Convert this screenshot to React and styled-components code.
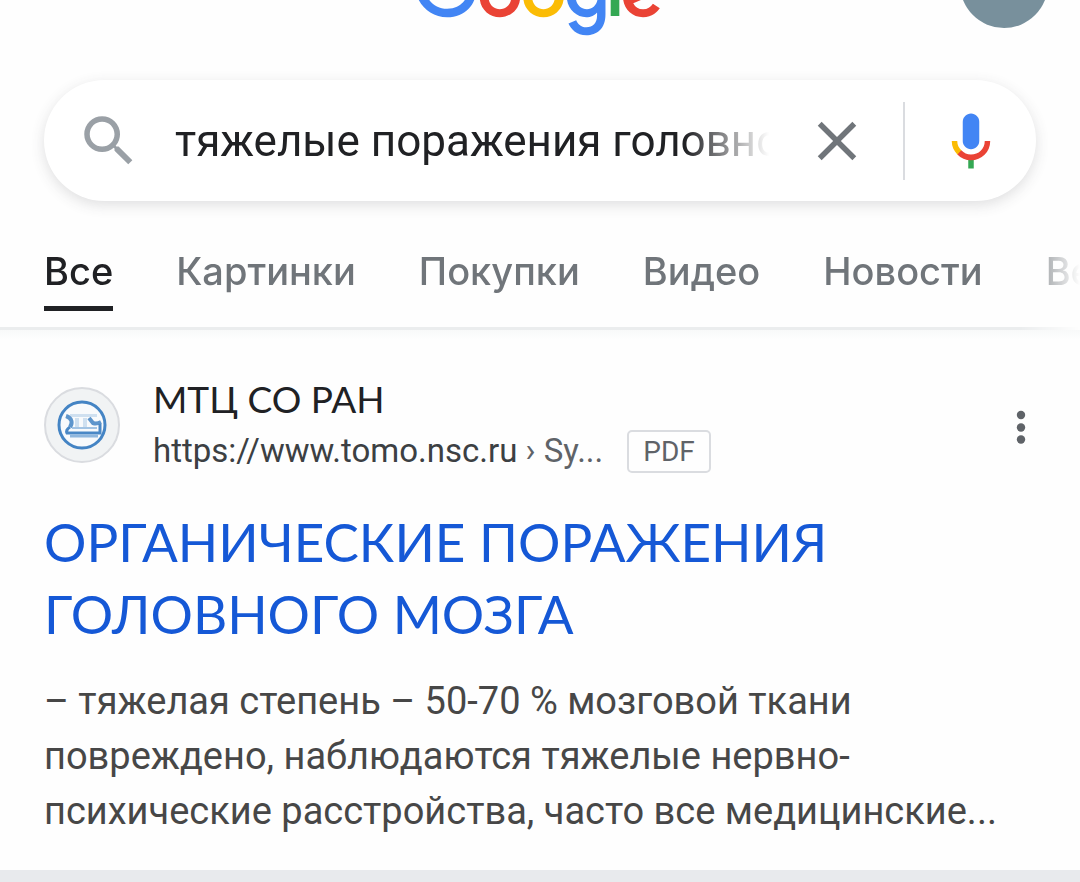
import React from "react";
import styled, { createGlobalStyle } from "styled-components";

const GlobalStyle = createGlobalStyle`
  * { box-sizing: border-box; }
  body { margin: 0; background: #fefefe; color: #202124; font-family: Roboto, "Liberation Sans", sans-serif; }
  button { border: 0; padding: 0; background: none; display: flex; cursor: pointer; }
`;

const Page = styled.div`
  overflow: hidden;
`;

const TopBar = styled.header`
  display: grid;
  grid-template-columns: 1fr auto 1fr;
  padding: 0 32px 0 28px;
  margin-top: -60px;
  height: 140px;
`;

const LogoLink = styled.a`
  grid-column: 2;
  align-self: start;
  display: flex;
  padding-top: 14px;
`;

const Avatar = styled.button`
  justify-self: end;
  align-self: start;
  width: 88px;
  height: 88px;
  border-radius: 50%;
  background: #78909c;
`;

const SearchBar = styled.form`
  display: flex;
  align-items: center;
  gap: 33px;
  height: 121px;
  margin: 0 44px;
  padding: 0 32px;
  border-radius: 61px;
  background: #fff;
  box-shadow: 0 4px 14px rgba(60, 64, 67, 0.16);
`;

const Icon = styled.svg`
  width: 66px;
  height: 66px;
  flex: none;
  display: block;
`;

const Query = styled.input`
  flex: 1;
  min-width: 0;
  border: 0;
  padding: 0;
  outline: 0;
  background: none;
  color: #202124;
  font: 400 44px/56px Roboto, "Liberation Sans", sans-serif;
  mask-image: linear-gradient(to left, transparent 2px, #000 86px);
`;

const Divider = styled.span`
  width: 2px;
  height: 78px;
  background: #dadce0;
`;

const Tabs = styled.nav`
  display: flex;
  gap: 63px;
  padding: 46px 44px 16px;
  overflow: hidden;
  border-bottom: 3px solid #ebedee;
  mask-image: linear-gradient(to left, transparent, #000 60px);
`;

const Tab = styled.a`
  flex: none;
  padding-bottom: 11px;
  border-bottom: 5px solid ${(p) => (p.$active ? "#202124" : "transparent")};
  color: ${(p) => (p.$active ? "#202124" : "#70757a")};
  font: 500 38px/48px Inter, "Liberation Sans", sans-serif;
  text-decoration: none;
`;

const Result = styled.article`
  padding: 43px 44px 31px;
  background: linear-gradient(#f8f9f9, #fefefe 10px);
`;

const Source = styled.div`
  display: flex;
  align-items: center;
  gap: 33px;
`;

const Favicon = styled.span`
  display: flex;
  align-items: center;
  justify-content: center;
  width: 76px;
  height: 76px;
  border: 2px solid #dadce0;
  border-radius: 50%;
  background: #f1f3f4;
`;

const SourceText = styled.div`
  flex: 1;
  min-width: 0;
`;

const SiteName = styled.div`
  font: 400 37px/52px Lato, "Liberation Sans", sans-serif;
`;

const UrlRow = styled.div`
  display: flex;
  align-items: center;
  gap: 24px;
  font-size: 33px;
  line-height: 52px;
  color: #3c4043;
`;

const Crumb = styled.span`
  color: #5f6368;
`;

const Badge = styled.span`
  padding: 0 14px;
  border: 2px solid #dadce0;
  border-radius: 5px;
  color: #5f6368;
  font-size: 28px;
  line-height: 39px;
`;

const Menu = styled.button`
  width: 30px;
  justify-content: center;
`;

const Title = styled.h3`
  margin: 29px 0 24px;
  font: 400 53px/72px Lato, "Liberation Sans", sans-serif;
`;

const TitleLink = styled.a`
  color: #1558d6;
  text-decoration: none;
`;

const Snippet = styled.p`
  margin: 0;
  font-size: 38px;
  line-height: 55px;
  color: #474747;
`;

const Band = styled.div`
  height: 12px;
  background: #e8eaed;
`;

const tabs = ["Все", "Картинки", "Покупки", "Видео", "Новости", "Ве"];

function GoogleLogo() {
  return (
    <svg width="247" height="84" viewBox="0 0 272 92" aria-hidden="true">
      <path fill="#EA4335" d="M115.75 47.18c0 12.77-9.99 22.18-22.25 22.18s-22.25-9.41-22.25-22.18C71.25 34.32 81.24 25 93.5 25s22.25 9.32 22.25 22.18zm-9.74 0c0-7.98-5.79-13.44-12.51-13.44S80.99 39.2 80.99 47.18c0 7.9 5.79 13.44 12.51 13.44s12.51-5.55 12.51-13.44z" />
      <path fill="#FBBC05" d="M163.75 47.18c0 12.77-9.99 22.18-22.25 22.18s-22.25-9.41-22.25-22.18c0-12.85 9.99-22.18 22.25-22.18s22.25 9.32 22.25 22.18zm-9.74 0c0-7.98-5.79-13.44-12.51-13.44s-12.51 5.46-12.51 13.44c0 7.9 5.79 13.44 12.51 13.44s12.51-5.55 12.51-13.44z" />
      <path fill="#4285F4" d="M209.75 26.34v39.82c0 16.38-9.66 23.07-21.08 23.07-10.75 0-17.22-7.19-19.66-13.07l8.48-3.53c1.51 3.61 5.21 7.87 11.17 7.87 7.31 0 11.84-4.51 11.84-13v-3.19h-.34c-2.18 2.69-6.38 5.04-11.68 5.04-11.09 0-21.25-9.66-21.25-22.09 0-12.52 10.16-22.26 21.25-22.26 5.29 0 9.49 2.35 11.68 4.96h.34v-3.61h9.25zm-8.56 20.92c0-7.81-5.21-13.52-11.84-13.52-6.72 0-12.35 5.71-12.35 13.52 0 7.73 5.63 13.36 12.35 13.36 6.63 0 11.84-5.63 11.84-13.36z" />
      <path fill="#34A853" d="M225 3v65h-9.5V3h9.5z" />
      <path fill="#EA4335" d="M262.02 54.48l7.56 5.04c-2.44 3.61-8.32 9.83-18.48 9.83-12.6 0-22.01-9.74-22.01-22.18 0-13.19 9.49-22.18 20.92-22.18 11.51 0 17.14 9.16 18.98 14.11l1.01 2.52-29.65 12.28c2.27 4.45 5.8 6.72 10.75 6.72 4.96 0 8.4-2.44 10.92-6.14zm-23.27-7.98l19.82-8.23c-1.09-2.77-4.37-4.7-8.23-4.7-4.95 0-11.84 4.37-11.59 12.93z" />
      <path fill="#4285F4" d="M35.29 41.41V32H67c.31 1.64.47 3.58.47 5.68 0 7.06-1.93 15.79-8.15 22.01-6.05 6.3-13.78 9.66-24.02 9.66C16.32 69.35.36 53.89.36 34.91.36 15.93 16.32.47 35.3.47c10.5 0 17.98 4.12 23.6 9.49l-6.64 6.64c-4.03-3.78-9.49-6.57-16.97-6.57-13.86 0-24.7 11.17-24.7 25.03 0 13.86 10.84 25.03 24.7 25.03 8.99 0 14.11-3.61 17.39-6.89 2.66-2.66 4.41-6.46 5.1-11.65l-22.49.01z" />
    </svg>
  );
}

export default function App() {
  return (
    <Page>
      <GlobalStyle />
      <TopBar>
        <LogoLink href="#" aria-label="Google"><GoogleLogo /></LogoLink>
        <Avatar type="button" aria-label="Аккаунт" />
      </TopBar>

      <SearchBar role="search">
        <Icon viewBox="0 0 24 24" fill="#9aa0a6" aria-hidden="true">
          <path d="M15.5 14h-.79l-.28-.27A6.47 6.47 0 0 0 16 9.500 6.500 6.500 0 1 0 9.500 16c1.610 0 3.090-.59 4.230-1.570l.27.28v.79l5 4.990L20.490 19l-4.990-5zm-6 0C7.010 14 5 11.990 5 9.500S7.010 5 9.500 5 14 7.010 14 9.500 11.990 14 9.500 14z" />
        </Icon>
        <Query type="text" aria-label="Поиск" defaultValue="тяжелые поражения головного мозга" />
        <button type="button" aria-label="Очистить">
          <Icon viewBox="0 0 24 24" fill="#70757a">
            <path d="M19 6.410L17.590 5 12 10.590 6.410 5 5 6.410 10.590 12 5 17.590 6.410 19 12 13.410 17.590 19 19 17.590 13.410 12z" />
          </Icon>
        </button>
        <Divider />
        <button type="button" aria-label="Голосовой поиск">
          <Icon viewBox="0 0 24 24">
            <path fill="#4285f4" d="m12 15c1.660 0 3-1.310 3-2.970v-7.020c0-1.660-1.340-3.010-3-3.010s-3 1.340-3 3.010v7.020c0 1.660 1.340 2.970 3 2.970z" />
            <path fill="#34a853" d="m11 18.080h2v3.920h-2z" />
            <path fill="#fbbc04" d="m7.050 16.870c-1.270-1.330-2.050-2.830-2.050-4.870h2c0 1.450 0.560 2.420 1.470 3.380v0.320l-1.150 1.180z" />
            <path fill="#ea4335" d="m12 16.930a4.970 5.250 0 0 1 -3.540 -1.550l-1.410 1.490c1.260 1.340 3.020 2.130 4.950 2.130 3.870 0 6.990-2.920 6.990-7h-1.990c0 2.920-2.240 4.930-5 4.930z" />
          </Icon>
        </button>
      </SearchBar>

      <Tabs>
        {tabs.map((name, i) => (
          <Tab key={name} href="#" $active={i === 0}>{name}</Tab>
        ))}
      </Tabs>

      <Result>
        <Source>
          <Favicon>
            <svg width="52" height="52" viewBox="0 0 52 52" fill="none" aria-hidden="true">
              <circle cx="26" cy="26" r="23" fill="#f8fafc" stroke="#4484c4" strokeWidth="3" />
              <path d="M14 15h27v3H14zM19 19h4v9h-4zM27 19h4v9h-4z" fill="#cfe0f0" />
              <path d="M10 17c6 2 7 7 4 11M33 19l4 5c3 1 6 0 8-1" stroke="#5d95cc" strokeWidth="4" />
              <path d="M14 28c-3 2-4 4-3 6h33v-9" stroke="#4a88c6" strokeWidth="3" />
              <path d="M16 29h25" stroke="#a3c4e4" strokeWidth="2" />
              <path d="M14 37h28" stroke="#8fb7de" strokeWidth="3" />
            </svg>
          </Favicon>
          <SourceText>
            <SiteName>МТЦ СО РАН</SiteName>
            <UrlRow>
              <span>https://www.tomo.nsc.ru <Crumb>› Sy...</Crumb></span>
              <Badge>PDF</Badge>
            </UrlRow>
          </SourceText>
          <Menu type="button" aria-label="Ещё">
            <svg width="10" height="38" viewBox="0 0 10 38" fill="#5f6368">
              <circle cx="5" cy="9" r="4.200" />
              <circle cx="5" cy="21.500" r="4.200" />
              <circle cx="5" cy="33.500" r="4.200" />
            </svg>
          </Menu>
        </Source>
        <Title><TitleLink href="#">ОРГАНИЧЕСКИЕ ПОРАЖЕНИЯ ГОЛОВНОГО МОЗГА</TitleLink></Title>
        <Snippet>
          – тяжелая степень – 50-70 % мозговой ткани повреждено, наблюдаются тяжелые нервно-психические расстройства, часто все медицинские...
        </Snippet>
      </Result>
      <Band />
    </Page>
  );
}
